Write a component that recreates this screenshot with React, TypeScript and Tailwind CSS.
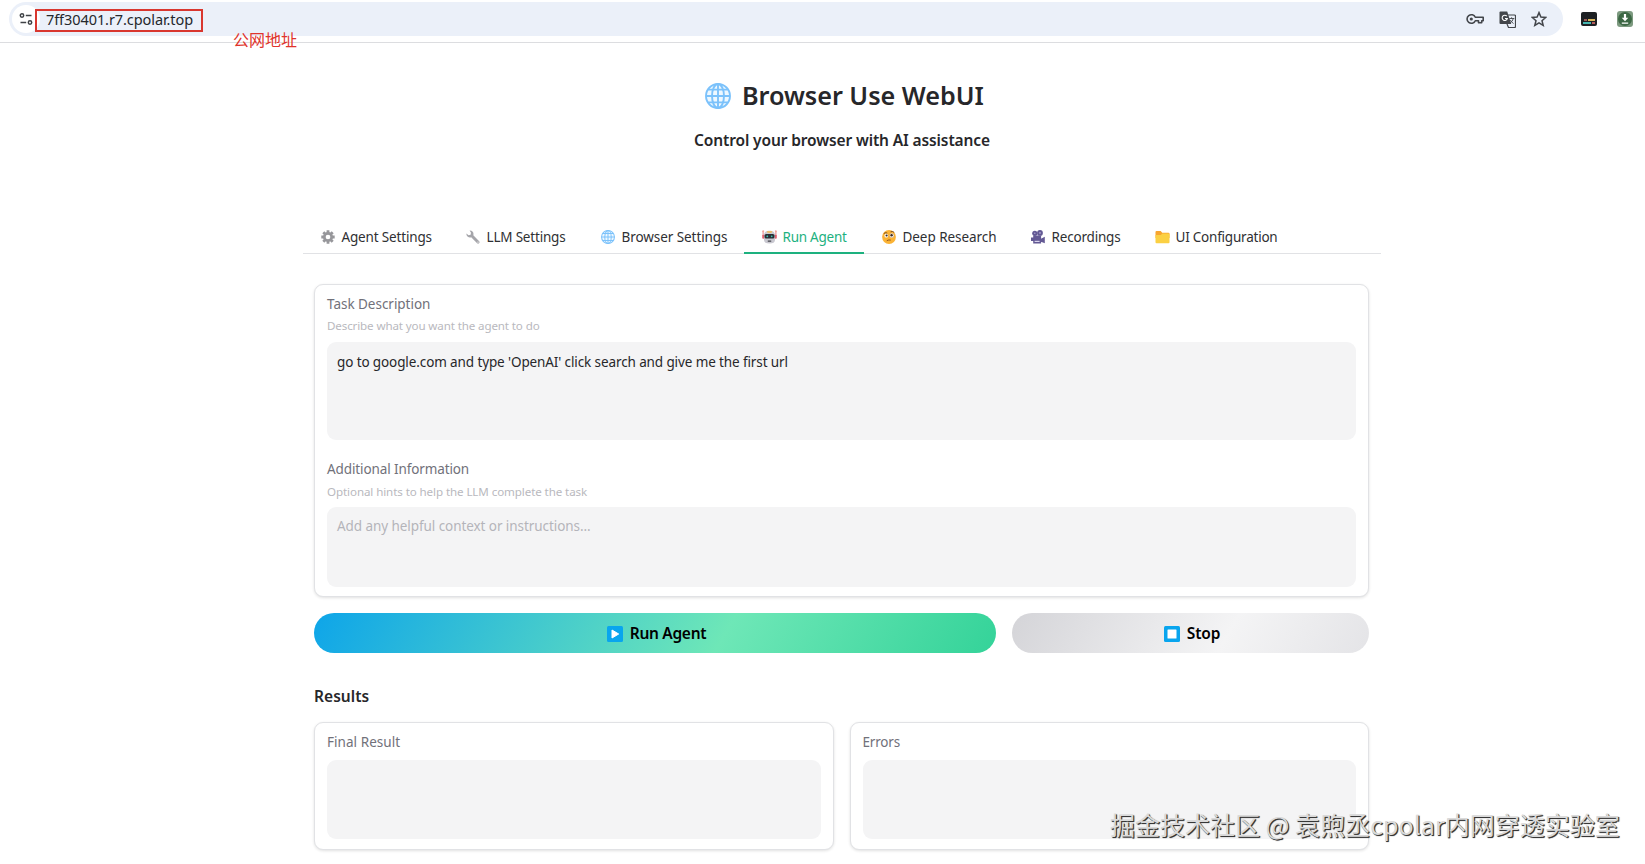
import type { ReactNode } from 'react';

function Globe({ className }: { className?: string }) {
  return (
    <svg viewBox="0 0 26 26" className={className} fill="none" stroke="#7cc2fb" strokeWidth="1.9">
      <circle cx="13" cy="13" r="12" fill="#eef8ff" />
      <ellipse cx="13" cy="13" rx="6" ry="12" />
      <path d="M13 1v24M1 13h24M3.3 6.6h19.4M3.3 19.4h19.4" />
    </svg>
  );
}

function Gear() {
  return (
    <svg viewBox="0 0 14 14" className="size-[14px]">
      <g stroke="#97979b" strokeWidth="2.8">
        <path d="M7 .3v13.4M.3 7h13.4M2.3 2.3l9.4 9.4M11.7 2.3l-9.4 9.4" />
      </g>
      <circle cx="7" cy="7" r="3.7" fill="#fff" stroke="#97979b" strokeWidth="2.7" />
    </svg>
  );
}

function Wrench() {
  return (
    <svg viewBox="0 0 14 14" className="size-[14px]">
      <path d="M3.6.5a3.6 3.6 0 0 1 3.7 4.7l5.9 6a1.5 1.5 0 0 1-2.1 2.1L5.2 7.3A3.6 3.6 0 0 1 .4 3.6l2.2 1.6 2-.5.4-2z" fill="#a5a5aa" />
      <circle cx="12" cy="12.1" r=".6" fill="#fff" />
    </svg>
  );
}

function Robot() {
  return (
    <svg viewBox="0 0 15 14" className="h-[14px] w-[15px]">
      <path d="M1.1 1v5M13.9 1v5" stroke="#e98a8f" strokeWidth="1.1" />
      <circle cx="1.2" cy="1.2" r="1" fill="#f3a5a0" />
      <circle cx="13.8" cy="1.2" r="1" fill="#f3a5a0" />
      <rect x=".2" y="4.8" width="2.1" height="4" rx="1" fill="#e0606f" />
      <rect x="12.7" y="4.8" width="2.1" height="4" rx="1" fill="#e0606f" />
      <path d="M2 5.5C2 2.2 4.3.8 7.5.8S13 2.2 13 5.5V10c0 2.500-2 3.500-5.500 3.500S2 12.500 2 10z" fill="#c9c8d0" />
      <path d="M4.800 1.200h5.400l-.7 1.500h-4z" fill="#f6b84e" />
      <rect x="2.500" y="4" width="10" height="4.600" rx="1.600" fill="#2b2f36" />
      <circle cx="5.300" cy="6.300" r=".9" fill="#3fc2b0" />
      <circle cx="9.700" cy="6.300" r=".9" fill="#3fc2b0" />
      <rect x="5.600" y="10.400" width="3.800" height="1.300" rx=".6" fill="#42434a" />
    </svg>
  );
}

function MonocleFace() {
  return (
    <svg viewBox="0 0 14 14" className="size-[14px]">
      <circle cx="7" cy="7" r="6.900" fill="#fbb335" />
      <path d="M1.800 3.600Q3.400 2.100 5.200 3M8.600 1.800q2-.9 3.600.6" stroke="#6b4120" strokeWidth=".9" fill="none" />
      <circle cx="4.300" cy="5.700" r="1.900" fill="#fff" />
      <circle cx="9.800" cy="5.500" r="2.200" fill="#fff" stroke="#c08a4a" strokeWidth=".4" />
      <circle cx="4.600" cy="5.500" r="1.100" fill="#3c2a20" />
      <circle cx="9.600" cy="5.300" r="1.200" fill="#3c2a20" />
      <path d="M4.800 10.700q2-1.200 4-.6" stroke="#8a4f1b" strokeWidth=".9" fill="none" />
    </svg>
  );
}

function Camera() {
  return (
    <svg viewBox="0 0 14 14" className="size-[14px]" fill="#635994">
      <circle cx="3.800" cy="3.300" r="2.600" />
      <circle cx="9" cy="2.900" r="2.900" />
      <path d="M2.200 5.600h7.900v7.900H2.200zM10 8.800l3.800-2v6.400l-3.800-1.500zM0 7.500h2.200v3.600H0z" />
      <circle cx="3.800" cy="3.300" r=".8" fill="#a9a1cf" />
      <circle cx="9" cy="2.900" r=".9" fill="#a9a1cf" />
      <path d="M3.600 10.800h5v1.200h-5z" fill="#d8d3ec" />
    </svg>
  );
}

function Folder() {
  return (
    <svg viewBox="0 0 15 14" className="h-[14px] w-[15px]">
      <path d="M.5 2Q.5 1 1.500 1h4.200l1.500 1.800h6.300q1 0 1 1V8H.5z" fill="#f8a52f" />
      <path d="M.5 5h5.300l1.500-1.400h6.200q1 0 1 1v7.600q0 1-1 1h-12q-1 0-1-1z" fill="#fbd043" />
    </svg>
  );
}

const tabs: { label: string; icon: ReactNode; box: string; text: string }[] = [
  { label: 'Agent Settings', icon: <Gear />, box: 'w-[145px]', text: 'tracking-[-0.16px]' },
  { label: 'LLM Settings', icon: <Wrench />, box: 'w-[135px]', text: 'tracking-[-0.19px]' },
  { label: 'Browser Settings', icon: <Globe className="size-[14px]" />, box: 'w-[161px]', text: 'tracking-[-0.07px]' },
  { label: 'Run Agent', icon: <Robot />, box: 'w-[120px]', text: 'tracking-[-0.25px]' },
  { label: 'Deep Research', icon: <MonocleFace />, box: 'w-[149px]', text: 'tracking-[-0.05px]' },
  { label: 'Recordings', icon: <Camera />, box: 'w-[124px]', text: 'tracking-[-0.19px]' },
  { label: 'UI Configuration', icon: <Folder />, box: 'w-[160px]', text: 'tracking-[-0.22px]' },
];

function AddressBar() {
  return (
    <header className="relative flex h-[43px] shrink-0 items-start border-b border-[#dcdde0] bg-white pl-[9px] pt-[2px]">
      <div className="flex h-[34px] w-[1554px] items-center rounded-full bg-[#ebf0f9] pl-[3px]">
        <div className="flex size-[28px] items-center justify-center rounded-full bg-white">
          <svg viewBox="0 0 14 14" className="size-[14px]" fill="none" stroke="#3f4246" strokeWidth="1.5">
            <circle cx="3" cy="3.500" r="1.700" />
            <path d="M6.800 3.500h5.700M1.500 10.500h5.700" />
            <circle cx="11" cy="10.500" r="1.700" />
          </svg>
        </div>
        <div className="ml-[-5px] mt-[3px] flex h-[23px] w-[168px] items-start border-2 border-[#d9372f] pl-[9px] text-[14.500px] leading-[18px] tracking-[-0.08px] text-[#25282c]">
          <span className="mt-[-1px] whitespace-nowrap">7ff30401.r7.cpolar.top</span>
        </div>
        <div className="ml-auto mr-[16px] flex items-center gap-[15px]">
          <svg viewBox="0 0 18 12" className="h-[12px] w-[18px]" fill="none" stroke="#43464b" strokeWidth="1.600">
            <path d="M9.300 4.300a4.300 4.300 0 1 0 0 3.400h3.200v2h3.200v-2h1.500V4.300z" strokeLinejoin="round" />
            <circle cx="5.300" cy="6" r="1.600" fill="#43464b" stroke="none" />
          </svg>
          <svg viewBox="0 0 17 17" className="size-[17px]">
            <path d="M1.500.5h6.700l4 12.500H1.500Q.5 13 .5 12V1.500q0-1 1-1z" fill="#43464b" />
            <path d="M9 4h6.500q1 0 1 1v10.500q0 1-1 1H9.500L8 13" fill="none" stroke="#43464b" strokeWidth="1.200" />
            <path d="M7.800 5.200A2.600 2.600 0 1 0 8.300 7.500H6" fill="none" stroke="#fff" strokeWidth="1.100" />
            <path d="M10.300 7.500h5M12.600 6.300v1.200M14.300 7.500q-.7 3-3.300 4.700M11.300 9q1.200 2.200 3.200 3.500" fill="none" stroke="#43464b" strokeWidth=".9" />
          </svg>
          <svg viewBox="0 0 16 16" className="size-[16px]" fill="none" stroke="#43464b" strokeWidth="1.500">
            <path d="M8 1.600l1.900 4.500 4.800.4-3.700 3.200 1.200 4.700L8 11.900l-4.200 2.500L5 9.700 1.300 6.500l4.800-.4z" />
          </svg>
        </div>
      </div>
      <div className="ml-[18px] mt-[10px] flex h-[14px] w-[16px] flex-col justify-end gap-[1px] rounded-[2px] bg-[#1d2023] p-[2px]">
        <div className="flex justify-end gap-[1px]">
          <i className="h-[2px] w-[3px] bg-[#9b5a57]" />
          <i className="h-[2px] w-[7px] bg-[#d8b65c]" />
        </div>
        <div className="flex gap-[1px]">
          <i className="h-[2px] w-[8px] bg-[#45b5b0]" />
          <i className="h-[2px] w-[3px] bg-[#b25c5b]" />
        </div>
      </div>
      <svg viewBox="0 0 16 16" className="ml-[20px] mt-[9px] size-[16px]">
        <rect width="16" height="16" rx="3" fill="#7d9a80" />
        <circle cx="8" cy="8" r="7" fill="#3c6844" />
        <path d="M6.900 3h2.200v3.800h2.200L8 10.200 4.700 6.800h2.200zM4.800 11.400h6.400v1.300H4.800z" fill="#fff" />
      </svg>
      <span className="absolute left-[233px] top-[28px] font-['Noto_Sans_CJK_SC',sans-serif] text-[16px] leading-[23px] text-[#e0342c]">
        公网地址
      </span>
    </header>
  );
}

const card = 'rounded-[9px] border border-[#e1e2e5] bg-white px-[12px] pt-[9px] shadow-[0_1px_3px_rgba(0,0,0,0.12)]';
const label = 'block text-[13.5px] leading-[20px] text-[#71717a]';
const hint = 'block text-[11.6px] leading-[16px] text-[#b9b9be]';
const area = 'rounded-[9px] bg-[#f4f4f5] px-[10px] text-[13.5px] leading-[20px]';

export default function App() {
  return (
    <div className="relative flex h-[864px] w-[1645px] flex-col overflow-hidden bg-white font-['Noto_Sans','Noto_Sans_CJK_SC',sans-serif] text-[#27272a]">
      <AddressBar />
      <main className="flex flex-col">
        <div className="mt-[35px] flex h-[36px] items-center pl-[705px]">
          <Globe className="size-[26px]" />
          <h1 className="mb-[2px] ml-[11px] whitespace-nowrap text-[25.2px] font-semibold leading-[34px] tracking-[-0.03px]">
            Browser Use WebUI
          </h1>
        </div>
        <h3 className="mt-[14px] pl-[694px] text-[15.5px] font-semibold leading-[24px] tracking-[-0.12px]">
          Control your browser with AI assistance
        </h3>

        <nav className="ml-[303px] mt-[68px] flex h-[34px] w-[1078px] border-b border-[#e1e2e5]">
          {tabs.map((tab) => {
            const active = tab.label === 'Run Agent';
            return (
              <button
                key={tab.label}
                className={`flex h-[34px] shrink-0 items-center border-b-2 pl-[18px] pt-[2px] text-[13.5px] leading-[20px] ${tab.box} ${active ? 'border-[#1db17f] text-[#1db17f]' : 'border-transparent text-[#2f3033]'}`}
              >
                <span className="flex w-[20.5px] shrink-0">{tab.icon}</span>
                <span className={`whitespace-nowrap ${tab.text}`}>{tab.label}</span>
              </button>
            );
          })}
        </nav>

        <div className="mx-[314px] mt-[30px] w-[1055px]">
          <section className={`h-[313px] ${card}`}>
            <label className={`${label} tracking-[-0.03px]`}>Task Description</label>
            <span className={`mt-[4px] ${hint} tracking-[-0.13px]`}>Describe what you want the agent to do</span>
            <div className={`mt-[8px] h-[98px] pt-[10px] ${area} tracking-[-0.11px]`}>
              go to google.com and type 'OpenAI' click search and give me the first url
            </div>
            <label className={`mt-[19px] ${label} tracking-[-0.11px]`}>Additional Information</label>
            <span className={`mt-[5px] ${hint} tracking-[-0.1px]`}>Optional hints to help the LLM complete the task</span>
            <div className={`mt-[7px] h-[80px] pt-[9px] ${area} tracking-[-0.07px] text-[#b4b4ba]`}>
              Add any helpful context or instructions...
            </div>
          </section>

          <div className="mt-[16px] flex h-[40px] gap-[16px] text-[15.5px] font-semibold text-black">
            <button className="flex w-[682px] items-center justify-center rounded-full bg-[linear-gradient(120deg,#0ea5e9_0%,#6ee7b7_60%,#34d399_100%)] pl-[3px] pt-[1px]">
              <svg viewBox="0 0 16 16" className="mr-[7px] size-[16px]">
                <rect width="16" height="16" rx="1.500" fill="#09a5ee" />
                <path d="M5 4v8L11.700 8z" fill="#fff" stroke="#fff" strokeLinejoin="round" />
              </svg>
              <span className="tracking-[-0.3px]">Run Agent</span>
            </button>
            <button className="flex w-[357px] items-center justify-center rounded-full bg-[linear-gradient(120deg,#d4d4d8_0%,#f4f4f5_60%,#e4e4e7_100%)] pl-[3px] pt-[1px]">
              <svg viewBox="0 0 16 16" className="mr-[7px] size-[16px]">
                <rect width="16" height="16" rx="1.500" fill="#09a5ee" />
                <rect x="3.500" y="3.500" width="9" height="9" rx=".5" fill="#fff" />
              </svg>
              <span className="tracking-[-0.15px]">Stop</span>
            </button>
          </div>

          <h3 className="mt-[31px] text-[15.5px] font-semibold leading-[24px] tracking-[0.05px]">Results</h3>

          <div className="mt-[14px] grid grid-cols-2 gap-[16px]">
            <section className={`h-[128px] ${card}`}>
              <label className={`${label} tracking-[0.05px]`}>Final Result</label>
              <div className={`mt-[8px] h-[79px] ${area}`} />
            </section>
            <section className={`h-[128px] ${card}`}>
              <label className={`${label} tracking-[-0.18px]`}>Errors</label>
              <div className={`mt-[8px] h-[79px] ${area}`} />
            </section>
          </div>
        </div>
      </main>
      <div className="absolute left-[1110px] top-[806px] whitespace-nowrap font-['Noto_Sans_CJK_SC',sans-serif] text-[25px] leading-[37px] tracking-[0.03px] text-[#dadada] [text-shadow:1px_1px_1px_#333,1px_1px_0_#555]">
        掘金技术社区 @ 袁煦丞cpolar内网穿透实验室
      </div>
    </div>
  );
}
